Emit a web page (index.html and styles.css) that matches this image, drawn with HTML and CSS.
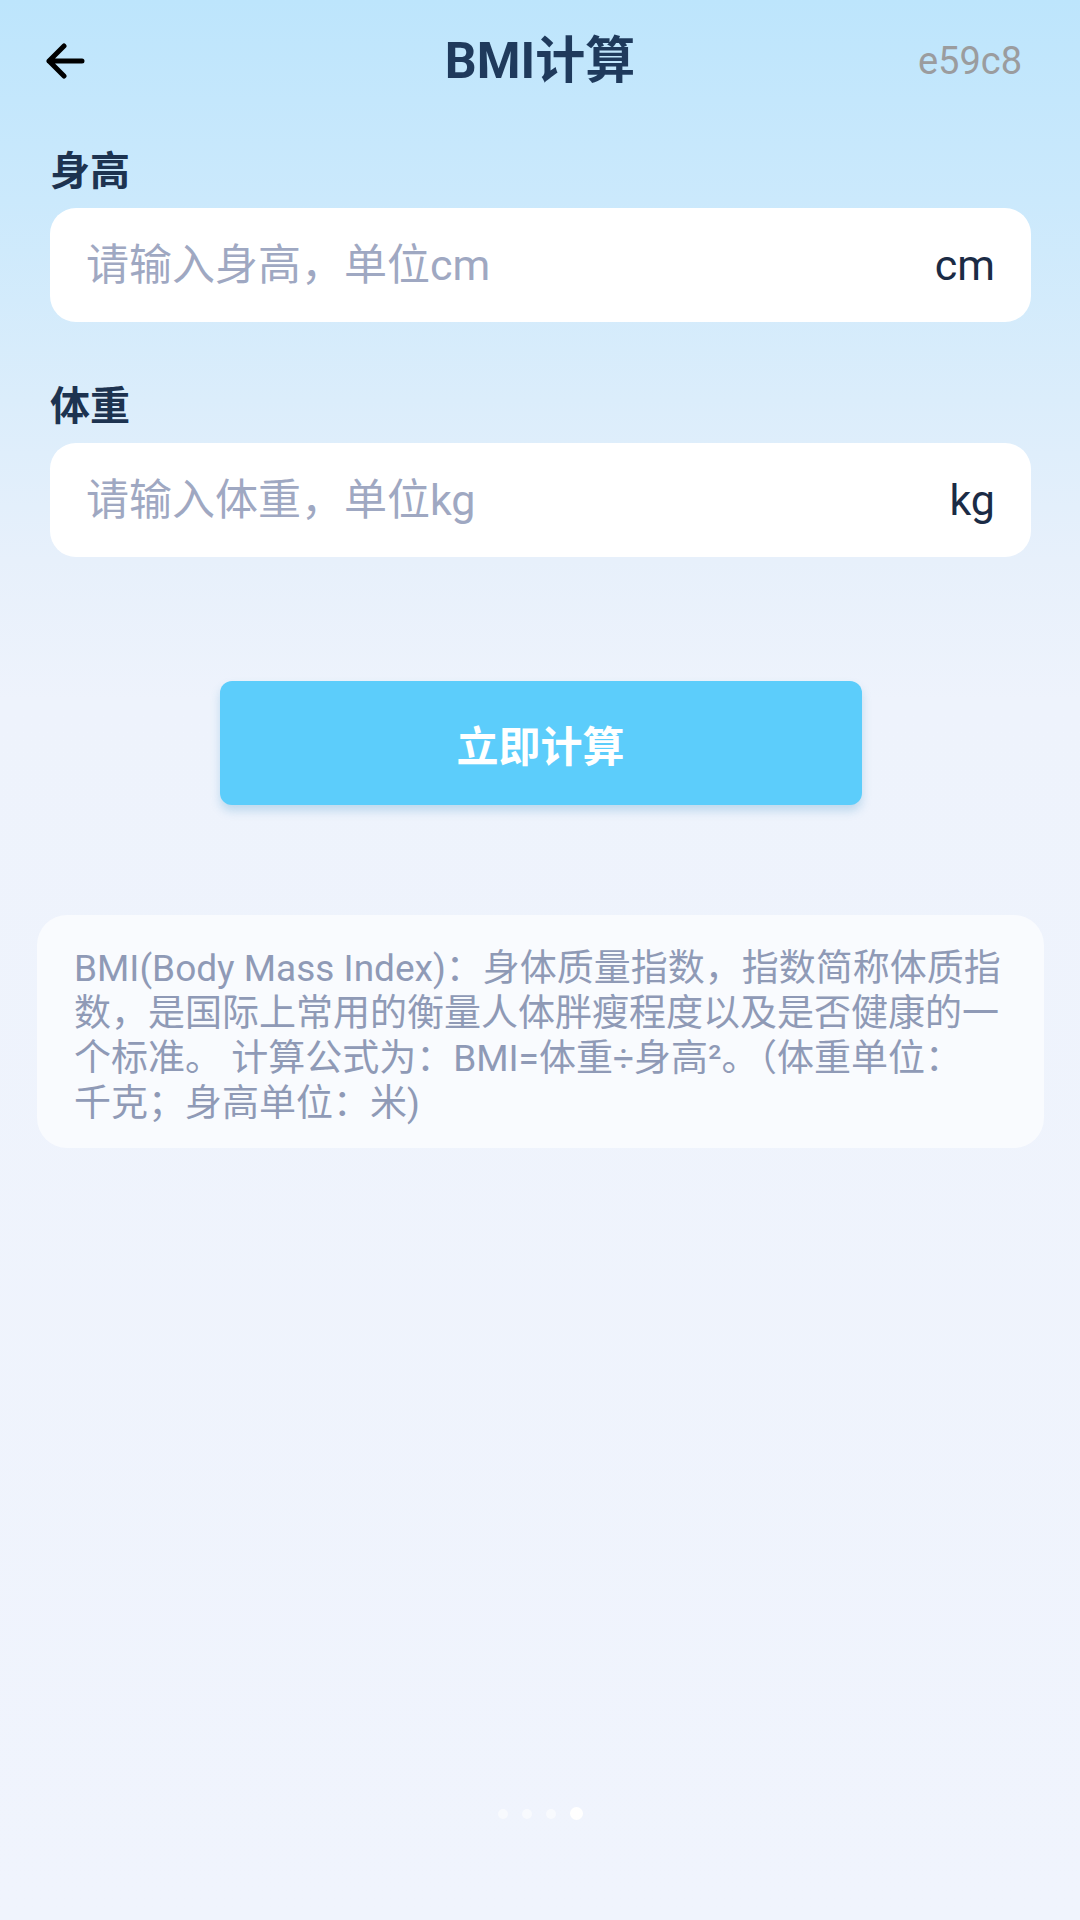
FILE: index.html
```html
<!DOCTYPE html>
<html lang="zh-CN">
<head>
<meta charset="utf-8">
<title>BMI计算</title>
<link rel="stylesheet" href="styles.css">
</head>
<body>
<div class="page">
  <header class="topbar">
    <button class="back" aria-label="返回">
      <svg width="40" height="36" viewBox="0 0 40 36"><path d="M37 18H4M19 3L4 18L19 33" fill="none" stroke="#000" stroke-width="5" stroke-linecap="round" stroke-linejoin="round"/></svg>
    </button>
    <h1 class="title">BMI计算</h1>
    <span class="ver">e59c8</span>
  </header>

  <main class="content">
    <label class="label" for="h">身高</label>
    <div class="field">
      <input id="h" class="input" type="text" placeholder="请输入身高，单位cm">
      <span class="unit">cm</span>
    </div>

    <label class="label label-2" for="w">体重</label>
    <div class="field">
      <input id="w" class="input" type="text" placeholder="请输入体重，单位kg">
      <span class="unit">kg</span>
    </div>

    <div class="actions">
      <button class="calc">立即计算</button>
    </div>

    <section class="info">
      <p>BMI(Body Mass Index)：身体质量指数，指数简称体质指<br>数，是国际上常用的衡量人体胖瘦程度以及是否健康的一<br>个标准。 计算公式为：BMI=体重÷身高²。（体重单位：<br>千克；身高单位：米)</p>
    </section>
  </main>

  <div class="dots">
    <span class="dot"></span><span class="dot"></span><span class="dot"></span><span class="dot on"></span>
  </div>
</div>
</body>
</html>
```

FILE: styles.css
```css
* { box-sizing: border-box; }

html, body {
  margin: 0;
  padding: 0;
}

body {
  width: 1080px;
  height: 1920px;
  font-family: Roboto, "Noto Sans CJK SC", sans-serif;
  background: linear-gradient(180deg, #bde5fc 0px, #cbe9fc 200px, #dbedfb 400px, #e7f0fb 560px, #eef3fc 700px, #f0f4fd 1920px);
  overflow: hidden;
}

.page {
  position: relative;
  width: 1080px;
  height: 1920px;
}

.topbar {
  height: 122px;
  padding: 0 45px;
  display: grid;
  grid-template-columns: 1fr auto 1fr;
  align-items: center;
}

.back {
  justify-self: start;
  background: none;
  border: 0;
  padding: 0;
  display: flex;
  width: 40px;
  height: 36px;
}

.title {
  margin: 0;
  font-size: 50px;
  font-weight: 700;
  color: #1f3a5c;
  line-height: 1;
}

.ver {
  justify-self: end;
  padding-right: 13px;
  font-size: 38px;
  color: #9b9c9e;
  line-height: 1;
}

.content {
  padding: 25px 49px 0 50px;
  display: flex;
  flex-direction: column;
}

.label {
  font-size: 40px;
  line-height: 50px;
  font-weight: 700;
  color: #1d3350;
}

.label-2 {
  margin-top: 60px;
}

.field {
  margin-top: 11px;
  height: 114px;
  background: #ffffff;
  border-radius: 26px;
  display: flex;
  align-items: center;
  padding: 0 36px 0 36px;
}

.input {
  flex: 1;
  min-width: 0;
  border: 0;
  outline: none;
  background: transparent;
  font-family: inherit;
  font-size: 43px;
  color: #1b2b45;
  padding: 0;
}

.input::placeholder {
  color: #9fa8c2;
}

.unit {
  font-size: 43px;
  color: #1b2b45;
}

.actions {
  margin-top: 124px;
  display: flex;
  justify-content: center;
}

.calc {
  width: 642px;
  height: 124px;
  border: 0;
  border-radius: 12px;
  background: #5ccdfb;
  color: #ffffff;
  font-family: inherit;
  font-size: 42px;
  font-weight: 700;
  box-shadow: 0 6px 10px rgba(70, 150, 200, 0.28);
}

.info {
  margin: 110px -13px 0 -13px;
  background: rgba(255, 255, 255, 0.62);
  border-radius: 30px;
  padding: 31px 20px 22px 37px;
}

.info p {
  margin: 0;
  font-size: 37px;
  line-height: 45px;
  color: #8f9ab6;
  white-space: nowrap;
}

.dots {
  position: absolute;
  left: 0;
  right: 0;
  top: 1807px;
  display: flex;
  justify-content: center;
  align-items: center;
  gap: 14px;
}

.dot {
  width: 10px;
  height: 10px;
  border-radius: 50%;
  background: rgba(255, 255, 255, 0.55);
}

.dot.on {
  width: 13px;
  height: 13px;
  background: #ffffff;
}
```
